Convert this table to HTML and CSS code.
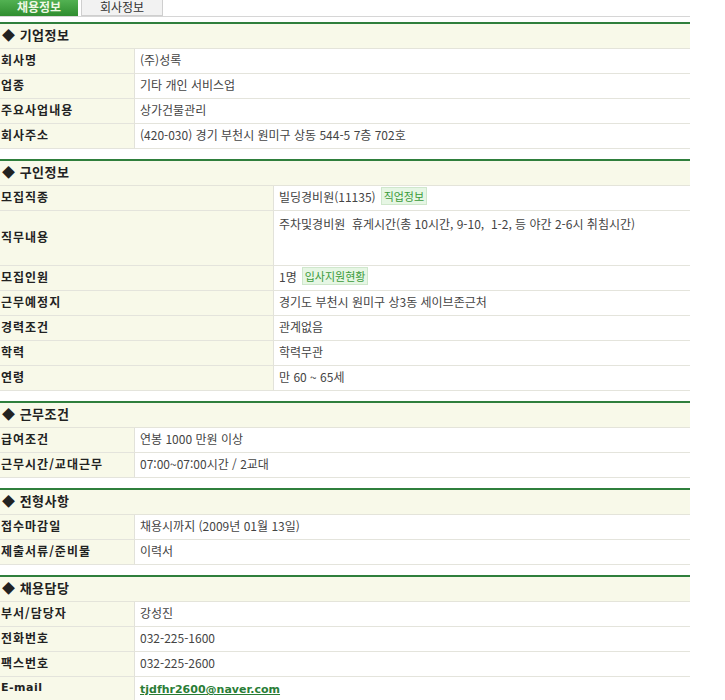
FILE: index.html
```html
<!DOCTYPE html>
<html lang="ko">
<head>
<meta charset="utf-8">
<title>채용정보</title>
<link rel="stylesheet" href="styles.css">
</head>
<body>
<div class="page">
  <nav class="tabs">
    <a class="tab tab-on">채용정보</a>
    <a class="tab tab-off">회사정보</a>
  </nav>

  <section class="sec">
    <h2 class="sec-head">◆ 기업정보</h2>
    <div class="grid grid-narrow">
      <div class="lbl">회사명</div><div class="val">(주)성록</div>
      <div class="lbl">업종</div><div class="val">기타 개인 서비스업</div>
      <div class="lbl">주요사업내용</div><div class="val">상가건물관리</div>
      <div class="lbl">회사주소</div><div class="val">(420-030) 경기 부천시 원미구 상동 544-5 7층 702호</div>
    </div>
  </section>

  <section class="sec">
    <h2 class="sec-head">◆ 구인정보</h2>
    <div class="grid grid-wide">
      <div class="lbl">모집직종</div><div class="val">빌딩경비원(11135)<span class="badge">직업정보</span></div>
      <div class="lbl lbl-tall">직무내용</div><div class="val val-tall">주차및경비원&nbsp; 휴게시간(총 10시간, 9-10,&nbsp; 1-2, 등 야간 2-6시 취침시간)</div>
      <div class="lbl">모집인원</div><div class="val">1명<span class="badge">입사지원현황</span></div>
      <div class="lbl">근무예정지</div><div class="val">경기도 부천시 원미구 상3동 세이브존근처</div>
      <div class="lbl">경력조건</div><div class="val">관계없음</div>
      <div class="lbl">학력</div><div class="val">학력무관</div>
      <div class="lbl">연령</div><div class="val">만 60 ~ 65세</div>
    </div>
  </section>

  <section class="sec">
    <h2 class="sec-head">◆ 근무조건</h2>
    <div class="grid grid-narrow">
      <div class="lbl">급여조건</div><div class="val">연봉 1000 만원 이상</div>
      <div class="lbl">근무시간/교대근무</div><div class="val">07:00~07:00시간 / 2교대</div>
    </div>
  </section>

  <section class="sec">
    <h2 class="sec-head">◆ 전형사항</h2>
    <div class="grid grid-narrow">
      <div class="lbl">접수마감일</div><div class="val">채용시까지 (2009년 01월 13일)</div>
      <div class="lbl">제출서류/준비물</div><div class="val">이력서</div>
    </div>
  </section>

  <section class="sec">
    <h2 class="sec-head">◆ 채용담당</h2>
    <div class="grid grid-narrow">
      <div class="lbl">부서/담당자</div><div class="val">강성진</div>
      <div class="lbl">전화번호</div><div class="val">032-225-1600</div>
      <div class="lbl">팩스번호</div><div class="val">032-225-2600</div>
      <div class="lbl lbl-latin">E-mail</div><div class="val"><a class="mail">tjdfhr2600@naver.com</a></div>
    </div>
  </section>
</div>
</body>
</html>
```

FILE: styles.css
```css
html, body {
  margin: 0;
  padding: 0;
  background: #ffffff;
}

body {
  font-family: "Noto Sans CJK KR", "Noto Sans", sans-serif;
  font-size: 12px;
  color: #444;
  overflow: hidden;
}

.page {
  width: 690px;
}

.tabs {
  display: flex;
  gap: 3px;
  height: 16px;
  border-bottom: 1px solid #d6d6d6;
}

.tab {
  display: block;
  height: 16px;
  line-height: 14px;
  box-sizing: border-box;
  font-size: 12px;
  font-weight: bold;
  text-align: center;
  flex: none;
}

.tab-on {
  width: 78px;
  background: linear-gradient(#52b152, #2f8d2f);
  color: #eef8e4;
}

.tab-off {
  width: 82px;
  background: #f2f2f2;
  border: 1px solid #cfcfcf;
  border-top: none;
  color: #333;
  font-weight: normal;
  line-height: 13px;
}

.sec {
  margin-top: 5px;
}

.sec + .sec {
  margin-top: 10px;
}

.sec-head {
  margin: 0;
  border-top: 2px solid #2f7f3c;
  border-bottom: 1px solid #e4e4da;
  background: #f8f9e9;
  height: 23px;
  line-height: 22px;
  padding: 0 0 1px 2px;
  font-size: 13px;
  font-weight: bold;
  color: #222;
  letter-spacing: 0.5px;
}

.grid {
  display: grid;
}

.grid-narrow {
  grid-template-columns: 135px 1fr;
}

.grid-wide {
  grid-template-columns: 274px 1fr;
}

.lbl,
.val {
  height: 23px;
  line-height: 22px;
  padding-bottom: 1px;
  border-bottom: 1px solid #e4e4dc;
  white-space: nowrap;
}

.lbl {
  background: #f8f9e9;
  border-right: 1px solid #e2e2da;
  padding-left: 1px;
  font-weight: bold;
  color: #222;
  letter-spacing: 1px;
}

.lbl-latin {
  font-family: "DejaVu Sans", sans-serif;
  font-size: 11px;
  letter-spacing: 0.5px;
}

.val {
  padding-left: 5px;
  color: #444;
}

.lbl-tall {
  height: 53px;
  line-height: 52px;
}

.val-tall {
  height: 51px;
  padding-top: 2px;
  padding-bottom: 1px;
}

.badge {
  display: inline-block;
  margin-left: 5px;
  height: 16px;
  line-height: 16px;
  padding: 0 2px;
  background: #e6f6e4;
  border: 1px solid #cfe7cc;
  color: #3a9a3a;
  font-size: 11px;
  vertical-align: 1px;
}

.mail {
  font-family: "DejaVu Sans", sans-serif;
  font-size: 11px;
  font-weight: bold;
  color: #2a7d36;
  text-decoration: underline;
}
```
